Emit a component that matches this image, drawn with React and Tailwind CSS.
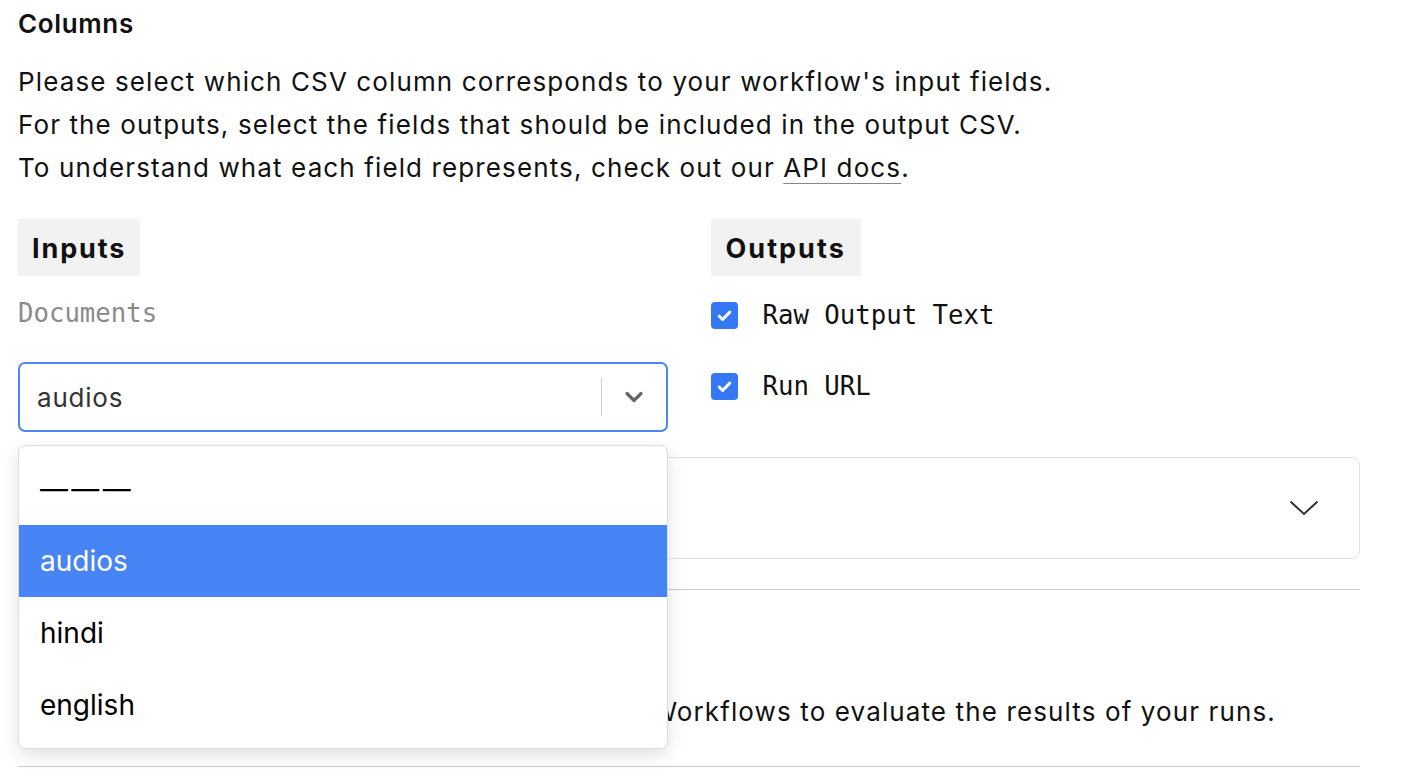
import React from "react";

const CheckBox = () => (
  <span className="flex h-[27px] w-[27px] items-center justify-center rounded-[4px] bg-[#3478f6]">
    <svg width="17" height="17" viewBox="0 0 16 16" fill="none">
      <path d="M3 8.5l3.2 3.2L13 4.8" stroke="#fff" strokeWidth="2.8" strokeLinecap="round" strokeLinejoin="round" />
    </svg>
  </span>
);

const options = ["———", "audios", "hindi", "english"];

export default function App() {
  return (
    <div
      className="min-h-screen bg-white pl-[18px] pr-[44px] text-[#111]"
      style={{ fontFamily: "Inter, 'Noto Sans', sans-serif" }}
    >
      <h2 className="pt-[8px] text-[26px] font-semibold leading-[32px] tracking-[0.025em]">
        Columns
      </h2>
      <div className="mt-[20px] text-[26px] leading-[43px] tracking-[0.043em]">
        <p>Please select which CSV column corresponds to your workflow's input fields.</p>
        <p>For the outputs, select the fields that should be included in the output CSV.</p>
        <p>
          To understand what each field represents, check out our{" "}
          <a className="underline decoration-[#888] decoration-1 underline-offset-[6px]">API docs</a>.
        </p>
      </div>

      <div className="mt-[30px] grid grid-cols-2 gap-x-[43px]">
        <div>
          <div className="inline-flex h-[57px] items-center bg-[#f2f2f2] px-[14px] pt-[3px] text-[27px] font-bold tracking-[0.07em]">
            Inputs
          </div>
          <div
            className="mt-[22px] text-[25.7px] leading-[30px] text-[#8a8a8a]"
            style={{ fontFamily: "'DejaVu Sans Mono', monospace" }}
          >
            Documents
          </div>
          <div className="relative mt-[34px]">
            <div className="flex h-[70px] items-center rounded-[7px] border-2 border-[#4a86f5] pl-[17px] pr-[22px]">
              <span className="flex-1 text-[26px] tracking-[0.03em] text-[#333]">audios</span>
              <span className="h-[38px] w-px bg-[#ccc]" />
              <svg className="ml-[22px]" width="20" height="12" viewBox="0 0 20 12" fill="none">
                <path d="M3 2.5l7 7 7-7" stroke="#666" strokeWidth="3.2" strokeLinecap="round" strokeLinejoin="round" />
              </svg>
            </div>
            <ul className="absolute left-0 top-[83px] z-10 w-full rounded-[7px] border border-[#dcdcdc] bg-white py-[7px] shadow-[0_6px_18px_rgba(0,0,0,0.12)]">
              {options.map((o) => (
                <li
                  key={o}
                  className={
                    o === "audios"
                      ? "flex h-[72px] items-center bg-[#4785f7] px-[21px] text-[28px] text-white"
                      : o === "———"
                      ? "flex h-[72px] items-center px-[21px] text-[28px] tracking-[0.12em] text-black"
                      : "flex h-[72px] items-center px-[21px] text-[28px] text-black"
                  }
                >
                  {o}
                </li>
              ))}
            </ul>
          </div>
        </div>

        <div>
          <div className="inline-flex h-[57px] items-center bg-[#f2f2f2] px-[15px] pt-[3px] text-[27px] font-bold tracking-[0.075em]">
            Outputs
          </div>
          <div
            className="mt-[24px] flex flex-col gap-[41px] text-[25.7px] leading-[30px]"
            style={{ fontFamily: "'DejaVu Sans Mono', monospace" }}
          >
            <label className="flex items-center gap-[25px]">
              <CheckBox />
              Raw Output Text
            </label>
            <label className="flex items-center gap-[25px]">
              <CheckBox />
              Run URL
            </label>
          </div>
        </div>
      </div>

      <div className="mt-[25px] flex h-[102px] items-center justify-between rounded-[8px] border border-[#e2e2e2] pl-[22px] pr-[40px]">
        <span className="text-[26px] tracking-[0.043em]">Advanced settings</span>
        <svg width="30" height="16" viewBox="0 0 30 16" fill="none">
          <path d="M1.5 1.5L15 14 28.5 1.5" stroke="#333" strokeWidth="2" />
        </svg>
      </div>

      <div className="mt-[30px] border-t border-[#c8c8c8]" />

      <h3 className="mt-[48px] text-[26px] font-semibold leading-[32px] tracking-[0.025em]">Evaluations</h3>
      <p className="mt-[20px] text-[26px] leading-[43px] tracking-[0.043em]">
        You can optionally pick one or more evaluation Workflows to evaluate the results of your runs.
      </p>
      <div className="mt-[33px] border-t border-[#c8c8c8]" />
    </div>
  );
}
